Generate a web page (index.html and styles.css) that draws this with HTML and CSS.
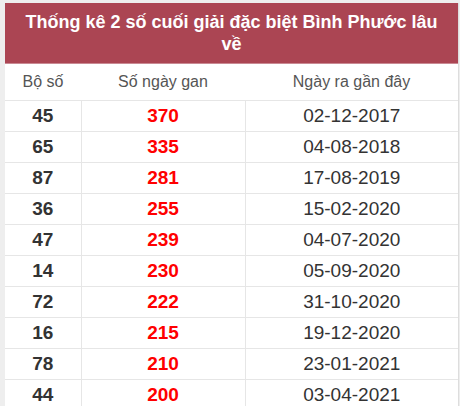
FILE: index.html
```html
<!DOCTYPE html>
<html lang="vi">
<head>
<meta charset="utf-8">
<link rel="stylesheet" href="styles.css">
</head>
<body>
<div class="box">
  <div class="title">Thống kê 2 số cuối giải đặc biệt Bình Phước lâu về</div>
  <table class="tbl">
    <thead>
      <tr><th class="c1">Bộ số</th><th class="c2">Số ngày gan</th><th class="c3">Ngày ra gần đây</th></tr>
    </thead>
    <tbody>
      <tr><td class="num">45</td><td class="gan">370</td><td class="date">02-12-2017</td></tr>
      <tr><td class="num">65</td><td class="gan">335</td><td class="date">04-08-2018</td></tr>
      <tr><td class="num">87</td><td class="gan">281</td><td class="date">17-08-2019</td></tr>
      <tr><td class="num">36</td><td class="gan">255</td><td class="date">15-02-2020</td></tr>
      <tr><td class="num">47</td><td class="gan">239</td><td class="date">04-07-2020</td></tr>
      <tr><td class="num">14</td><td class="gan">230</td><td class="date">05-09-2020</td></tr>
      <tr><td class="num">72</td><td class="gan">222</td><td class="date">31-10-2020</td></tr>
      <tr><td class="num">16</td><td class="gan">215</td><td class="date">19-12-2020</td></tr>
      <tr><td class="num">78</td><td class="gan">210</td><td class="date">23-01-2021</td></tr>
      <tr><td class="num">44</td><td class="gan">200</td><td class="date">03-04-2021</td></tr>
    </tbody>
  </table>
</div>
</body>
</html>
```
FILE: styles.css
```css
html, body {
  margin: 0;
  padding: 0;
}
body {
  background: #eeeeee;
  padding: 3px 0 0 5px;
  font-family: "Liberation Sans", Arial, sans-serif;
  overflow: hidden;
}
.box {
  width: 453px;
  background: #ffffff;
  border-right: 1px solid #dddddd;
}
.title {
  background: #ab4553;
  color: #ffffff;
  font-weight: bold;
  font-size: 18px;
  line-height: 22px;
  text-align: center;
  padding: 8px 20px 8px;
  border-bottom: 1px solid #c98a93;
}
.tbl {
  width: 100%;
  border-collapse: collapse;
  table-layout: fixed;
}
.tbl th {
  font-weight: normal;
  font-size: 16px;
  color: #555555;
  height: 36px;
  padding: 0;
  border-bottom: 1px solid #e6e6e6;
}
.c1 { width: 76px; }
.c2 { width: 164px; }
.tbl td {
  height: 30px;
  padding: 0;
  text-align: center;
  font-size: 19px;
  color: #333333;
  border-bottom: 1px solid #e6e6e6;
  border-right: 1px solid #e6e6e6;
}
.tbl td:last-child { border-right: none; }
.num { font-weight: bold; }
.gan { font-weight: bold; color: #ff0000 !important; }
```
